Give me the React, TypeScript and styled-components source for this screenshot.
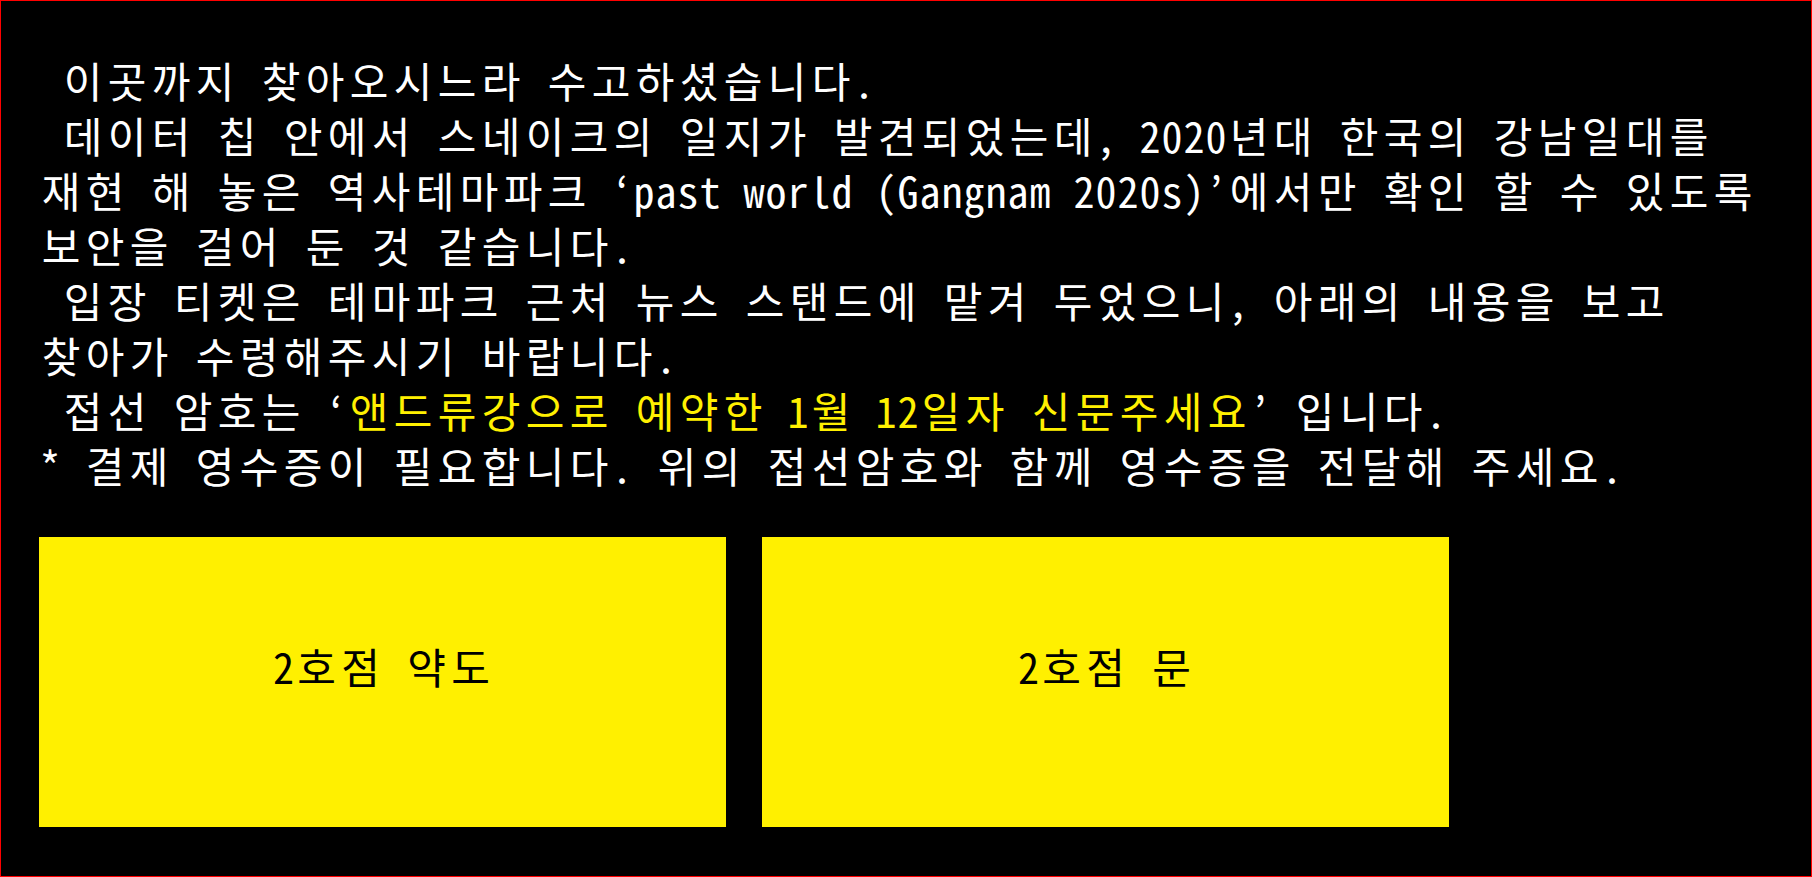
import React from "react";
import styled, { createGlobalStyle } from "styled-components";

// 원본은 픽셀 폰트라 한글은 44px, 영문/숫자/공백은 22px 칸에 맞춰 찍혀 있습니다
// 설치된 폰트로는 폭이 안 맞아서 글자마다 고정 폭 칸을 만들어 줍니다
const WIDE = 44;
const NARROW = 22;

type Tone = "plain" | "secret";
type Segment = { text: string; tone?: Tone };

// 원본 화면의 줄바꿈 그대로 줄 단위로 적어둡니다
const STORY: Segment[][] = [
  [{ text: " 이곳까지 찾아오시느라 수고하셨습니다." }],
  [{ text: " 데이터 칩 안에서 스네이크의 일지가 발견되었는데, 2020년대 한국의 강남일대를" }],
  [{ text: "재현 해 놓은 역사테마파크 ‘past world (Gangnam 2020s)’에서만 확인 할 수 있도록" }],
  [{ text: "보안을 걸어 둔 것 같습니다." }],
  [{ text: " 입장 티켓은 테마파크 근처 뉴스 스탠드에 맡겨 두었으니, 아래의 내용을 보고" }],
  [{ text: "찾아가 수령해주시기 바랍니다." }],
  [
    { text: " 접선 암호는 ‘" },
    { text: "앤드류강으로 예약한 1월 12일자 신문주세요", tone: "secret" },
    { text: "’ 입니다." },
  ],
  [{ text: "* 결제 영수증이 필요합니다. 위의 접선암호와 함께 영수증을 전달해 주세요." }],
];

const isWide = (ch: string) => /[\u1100-\u11FF\u3130-\u318F\uAC00-\uD7A3]/.test(ch);

const GlobalStyle = createGlobalStyle`
  html, body {
    margin: 0;
    padding: 0;
    background: #000000;
  }
  * {
    box-sizing: border-box;
  }
`;

const Screen = styled.div`
  width: 100vw;
  height: 100vh;
  border: 1px solid #ff0000;
  background: #000000;
  padding: 51px 38px 0 38px;
  font-family: "Noto Sans Mono CJK KR", "Noto Sans CJK KR", monospace;
  font-size: 42px;
  color: #ffffff;
  overflow: hidden;
`;

const Story = styled.div`
  display: flex;
  flex-direction: column;
`;

const Line = styled.div`
  display: flex;
  height: 55px;
  line-height: 55px;
  white-space: pre;
`;

const Cell = styled.span<{ $wide: boolean; $tone: Tone }>`
  display: inline-block;
  flex: none;
  width: ${(p) => (p.$wide ? WIDE : NARROW)}px;
  text-align: center;
  color: ${(p) => (p.$tone === "secret" ? "#fff000" : "inherit")};
`;

const ButtonRow = styled.div`
  display: flex;
  gap: 36px;
  margin-top: 45px;
`;

const MapButton = styled.button`
  width: 687px;
  height: 290px;
  border: none;
  background: #fff000;
  color: #000000;
  font-family: inherit;
  font-size: 42px;
  display: flex;
  justify-content: center;
  align-items: center;
  padding: 0 0 34px 0;
  cursor: pointer;
`;

const Glyphs = ({ segments }: { segments: Segment[] }) => (
  <>
    {segments.map((seg, i) =>
      Array.from(seg.text).map((ch, j) => (
        <Cell key={`${i}-${j}`} $wide={isWide(ch)} $tone={seg.tone ?? "plain"}>
          {ch}
        </Cell>
      ))
    )}
  </>
);

const App = () => {
  return (
    <>
      <GlobalStyle />
      <Screen>
        <Story>
          {STORY.map((line, index) => (
            <Line key={index}>
              <Glyphs segments={line} />
            </Line>
          ))}
        </Story>
        <ButtonRow>
          <MapButton>
            <Line>
              <Glyphs segments={[{ text: "2호점 약도" }]} />
            </Line>
          </MapButton>
          <MapButton>
            <Line>
              <Glyphs segments={[{ text: "2호점 문" }]} />
            </Line>
          </MapButton>
        </ButtonRow>
      </Screen>
    </>
  );
};

export default App;
